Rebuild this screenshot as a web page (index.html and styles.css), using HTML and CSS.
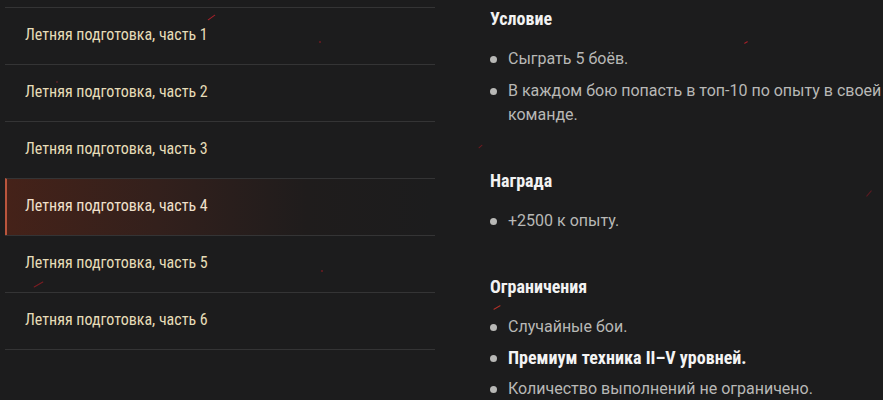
FILE: index.html
```html
<!DOCTYPE html>
<html lang="ru">
<head>
<meta charset="utf-8">
<title>Летняя подготовка</title>
<link rel="stylesheet" href="styles.css">
</head>
<body>
<div class="page">
  <ul class="missions">
    <li class="mission">Летняя подготовка, часть 1</li>
    <li class="mission">Летняя подготовка, часть 2</li>
    <li class="mission">Летняя подготовка, часть 3</li>
    <li class="mission active">Летняя подготовка, часть 4</li>
    <li class="mission">Летняя подготовка, часть 5</li>
    <li class="mission">Летняя подготовка, часть 6</li>
  </ul>
  <div class="details">
    <section class="block">
      <h3 class="title">Условие</h3>
      <ul class="items">
        <li>Сыграть 5 боёв.</li>
        <li>В каждом бою попасть в топ-10 по опыту в своей команде.</li>
      </ul>
    </section>
    <section class="block">
      <h3 class="title">Награда</h3>
      <ul class="items">
        <li>+2500 к опыту.</li>
      </ul>
    </section>
    <section class="block tight">
      <h3 class="title">Ограничения</h3>
      <ul class="items">
        <li>Случайные бои.</li>
        <li class="strong">Премиум техника II–V уровней.</li>
        <li>Количество выполнений не ограничено.</li>
      </ul>
    </section>
  </div>
  <div class="sparks">
    <span class="spark s1"></span>
    <span class="spark s2"></span>
    <span class="spark s3"></span>
    <span class="spark s4"></span>
    <span class="spark s5"></span>
    <span class="spark s6"></span>
    <span class="spark s7"></span>
    <span class="spark s8"></span>
    <span class="spark s9"></span>
  </div>
</div>
</body>
</html>
```

FILE: styles.css
```css
html, body {
  margin: 0;
  padding: 0;
  background: #1c1c1d;
}
body {
  width: 883px;
  height: 400px;
  overflow: hidden;
}
.page {
  position: relative;
  display: flex;
  gap: 55px;
  padding: 7px 0 0 5px;
  height: 393px;
  overflow: hidden;
}
.missions {
  list-style: none;
  margin: 0;
  padding: 0;
  width: 430px;
  flex: none;
  align-self: flex-start;
  border-bottom: 1px solid #343435;
}
.mission {
  height: 56px;
  box-sizing: border-box;
  border-top: 1px solid #343435;
  display: flex;
  align-items: center;
  padding: 0 0 3px 20px;
  font-family: "Roboto Condensed", "Liberation Sans Narrow", "DejaVu Sans Condensed", sans-serif;
  font-size: 16px;
  color: #e6dcb8;
}
.mission + .mission {
  height: 57px;
}
.mission:first-child {
  height: 57px;
}
.mission.active {
  padding-left: 18px;
  border-left: 2px solid #b9553d;
  background: linear-gradient(90deg, #452219 0%, #33201c 35%, #1f1c1c 70%, #1c1c1d 100%);
  color: #f0e0cc;
}
.details {
  flex: 1;
}
.block {
  margin-bottom: 42px;
}
.title {
  margin: 0 0 16px;
  font-family: "Roboto Condensed", "Liberation Sans Narrow", "DejaVu Sans Condensed", sans-serif;
  font-weight: 700;
  font-size: 18px;
  line-height: 24px;
  color: #f2f2f2;
}
.items {
  list-style: none;
  margin: 0;
  padding: 0;
}
.items li {
  position: relative;
  padding-left: 18px;
  margin-bottom: 8px;
  font-family: Roboto, "Liberation Sans", sans-serif;
  font-size: 16px;
  line-height: 24px;
  color: #b8b8b6;
}
.tight .items li {
  margin-bottom: 7px;
}
.items li:last-child {
  margin-bottom: 0;
}
.items li::before {
  content: "";
  position: absolute;
  left: 0;
  top: 9px;
  width: 7px;
  height: 7px;
  border-radius: 50%;
  background: #b8b8b6;
}
.items li.strong {
  font-family: "Roboto Condensed", "Liberation Sans Narrow", "DejaVu Sans Condensed", sans-serif;
  font-weight: 700;
  font-size: 18px;
  color: #f4f4f4;
}
.sparks {
  position: absolute;
  inset: 0;
  pointer-events: none;
}
.spark {
  position: absolute;
  height: 1px;
  background: #a8202a;
  border-radius: 1px;
}
.s1 { left: 207px; top: 17px; width: 9px; transform: rotate(-35deg); }
.s2 { left: 319px; top: 41px; width: 2px; height: 2px; background: #6e1a20; }
.s3 { left: 56px; top: 81px; width: 2px; height: 2px; background: #5a2026; }
.s4 { left: 744px; top: 42px; width: 4px; transform: rotate(-30deg); }
.s5 { left: 478px; top: 146px; width: 5px; transform: rotate(-40deg); background: #6e1a20; }
.s6 { left: 865px; top: 193px; width: 8px; transform: rotate(-50deg); background: #5c1a22; }
.s7 { left: 321px; top: 270px; width: 2px; height: 2px; background: #6e1a20; }
.s8 { left: 33px; top: 284px; width: 11px; transform: rotate(-30deg); background: #7c1d22; }
.s9 { left: 493px; top: 307px; width: 8px; transform: rotate(-30deg); background: #b03028; }
```
